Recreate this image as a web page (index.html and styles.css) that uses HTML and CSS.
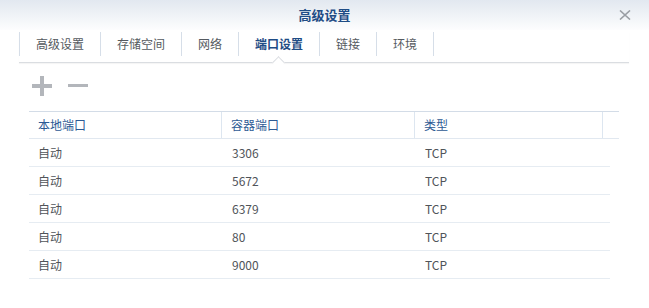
FILE: index.html
```html
<!DOCTYPE html>
<html lang="zh-CN">
<head>
  <meta charset="UTF-8" />
  <meta name="viewport" content="width=device-width, initial-scale=1.0" />
  <title>高级设置</title>
  <link rel="stylesheet" href="styles.css">
</head>
<body>
  <div class="titlebar">
    <span></span>
    <div class="title">高级设置</div>
    <div class="close">
      <svg width="12" height="10" viewBox="0 0 12 10">
        <path d="M1 0.5 L11 9.5 M11 0.5 L1 9.5" stroke="#9a9ea4" stroke-width="1.6" fill="none"/>
      </svg>
    </div>
  </div>

  <div class="tabs">
    <div class="tab">高级设置</div>
    <div class="tab">存储空间</div>
    <div class="tab">网络</div>
    <div class="tab active">端口设置</div>
    <div class="tab">链接</div>
    <div class="tab last">环境</div>
  </div>

  <div class="toolbar">
    <svg class="tool" width="20" height="20" viewBox="0 0 20 20">
      <rect x="0" y="8" width="20" height="4" fill="#b3b6bb"/>
      <rect x="8" y="0" width="4" height="20" fill="#b3b6bb"/>
    </svg>
    <svg class="tool" width="20" height="20" viewBox="0 0 20 20">
      <rect x="0" y="8" width="20" height="3" fill="#b3b6bb"/>
    </svg>
  </div>

  <div class="grid">
    <div class="head">
      <div class="hcell">本地端口</div>
      <div class="hcell">容器端口</div>
      <div class="hcell">类型</div>
      <div class="hcell spacer"></div>
    </div>
    <div class="rows">
      <div class="row"><div class="cell">自动</div><div class="cell">3306</div><div class="cell">TCP</div></div>
      <div class="row"><div class="cell">自动</div><div class="cell">5672</div><div class="cell">TCP</div></div>
      <div class="row"><div class="cell">自动</div><div class="cell">6379</div><div class="cell">TCP</div></div>
      <div class="row"><div class="cell">自动</div><div class="cell">80</div><div class="cell">TCP</div></div>
      <div class="row"><div class="cell">自动</div><div class="cell">9000</div><div class="cell">TCP</div></div>
    </div>
  </div>
</body>
</html>
```

FILE: styles.css
```css
body {
  margin: 0;
  background: #fff;
  font-family: "Noto Sans CJK SC", "Noto Sans", sans-serif;
  font-size: 12px;
  color: #505459;
}
.titlebar {
  height: 30px;
  display: grid;
  grid-template-columns: 1fr auto 1fr;
  align-items: center;
  background: linear-gradient(#e2e8f0, #f6f8fa 75%, #fdfdfe);
}
.title {
  font-size: 13px;
  font-weight: bold;
  color: #1f4c85;
  line-height: 30px;
}
.close {
  justify-self: end;
  margin-right: 18px;
  height: 10px;
  display: flex;
}
.tabs {
  margin: 2px 20px 0 19px;
  height: 30px;
  display: flex;
  align-items: flex-start;
  border-bottom: 1px solid #dadde1;
  box-shadow: 0 1px 1px rgba(0,0,0,0.04);
}
.tab {
  position: relative;
  height: 24px;
  line-height: 24px;
  padding: 0 16px;
  border-left: 1px solid #d6dee8;
  color: #555a60;
}
.tab.last {
  border-right: 1px solid #d6dee8;
}
.tab.active {
  color: #1f4c85;
  font-weight: bold;
}
.tab.active::after {
  content: "";
  position: absolute;
  left: 50%;
  bottom: -11px;
  width: 8px;
  height: 8px;
  margin-left: -5px;
  background: #fff;
  border-top: 1px solid #dadde1;
  border-left: 1px solid #dadde1;
  transform: rotate(45deg);
}
.toolbar {
  height: 48px;
  display: flex;
  align-items: center;
  gap: 16px;
  padding-left: 32px;
  box-sizing: border-box;
  padding-bottom: 2px;
}
.grid {
  margin-left: 29px;
  width: 590px;
}
.head {
  display: grid;
  grid-template-columns: 193px 193px 188px 16px;
  border-top: 1px solid #d3dce7;
  border-bottom: 1px solid #e1e8f0;
}
.hcell {
  height: 26px;
  line-height: 26px;
  padding-left: 9px;
  color: #2d5a94;
  border-right: 1px solid #dde6f0;
}
.hcell.spacer {
  border-right: none;
}
.rows {
  width: 581px;
}
.row {
  display: grid;
  grid-template-columns: 193px 193px 195px;
  height: 27px;
  border-bottom: 1px solid #e6ecf2;
}
.cell {
  line-height: 27px;
  padding-left: 9px;
}
.row .cell:nth-child(2),
.row .cell:nth-child(3) {
  padding-left: 10px;
}
```
